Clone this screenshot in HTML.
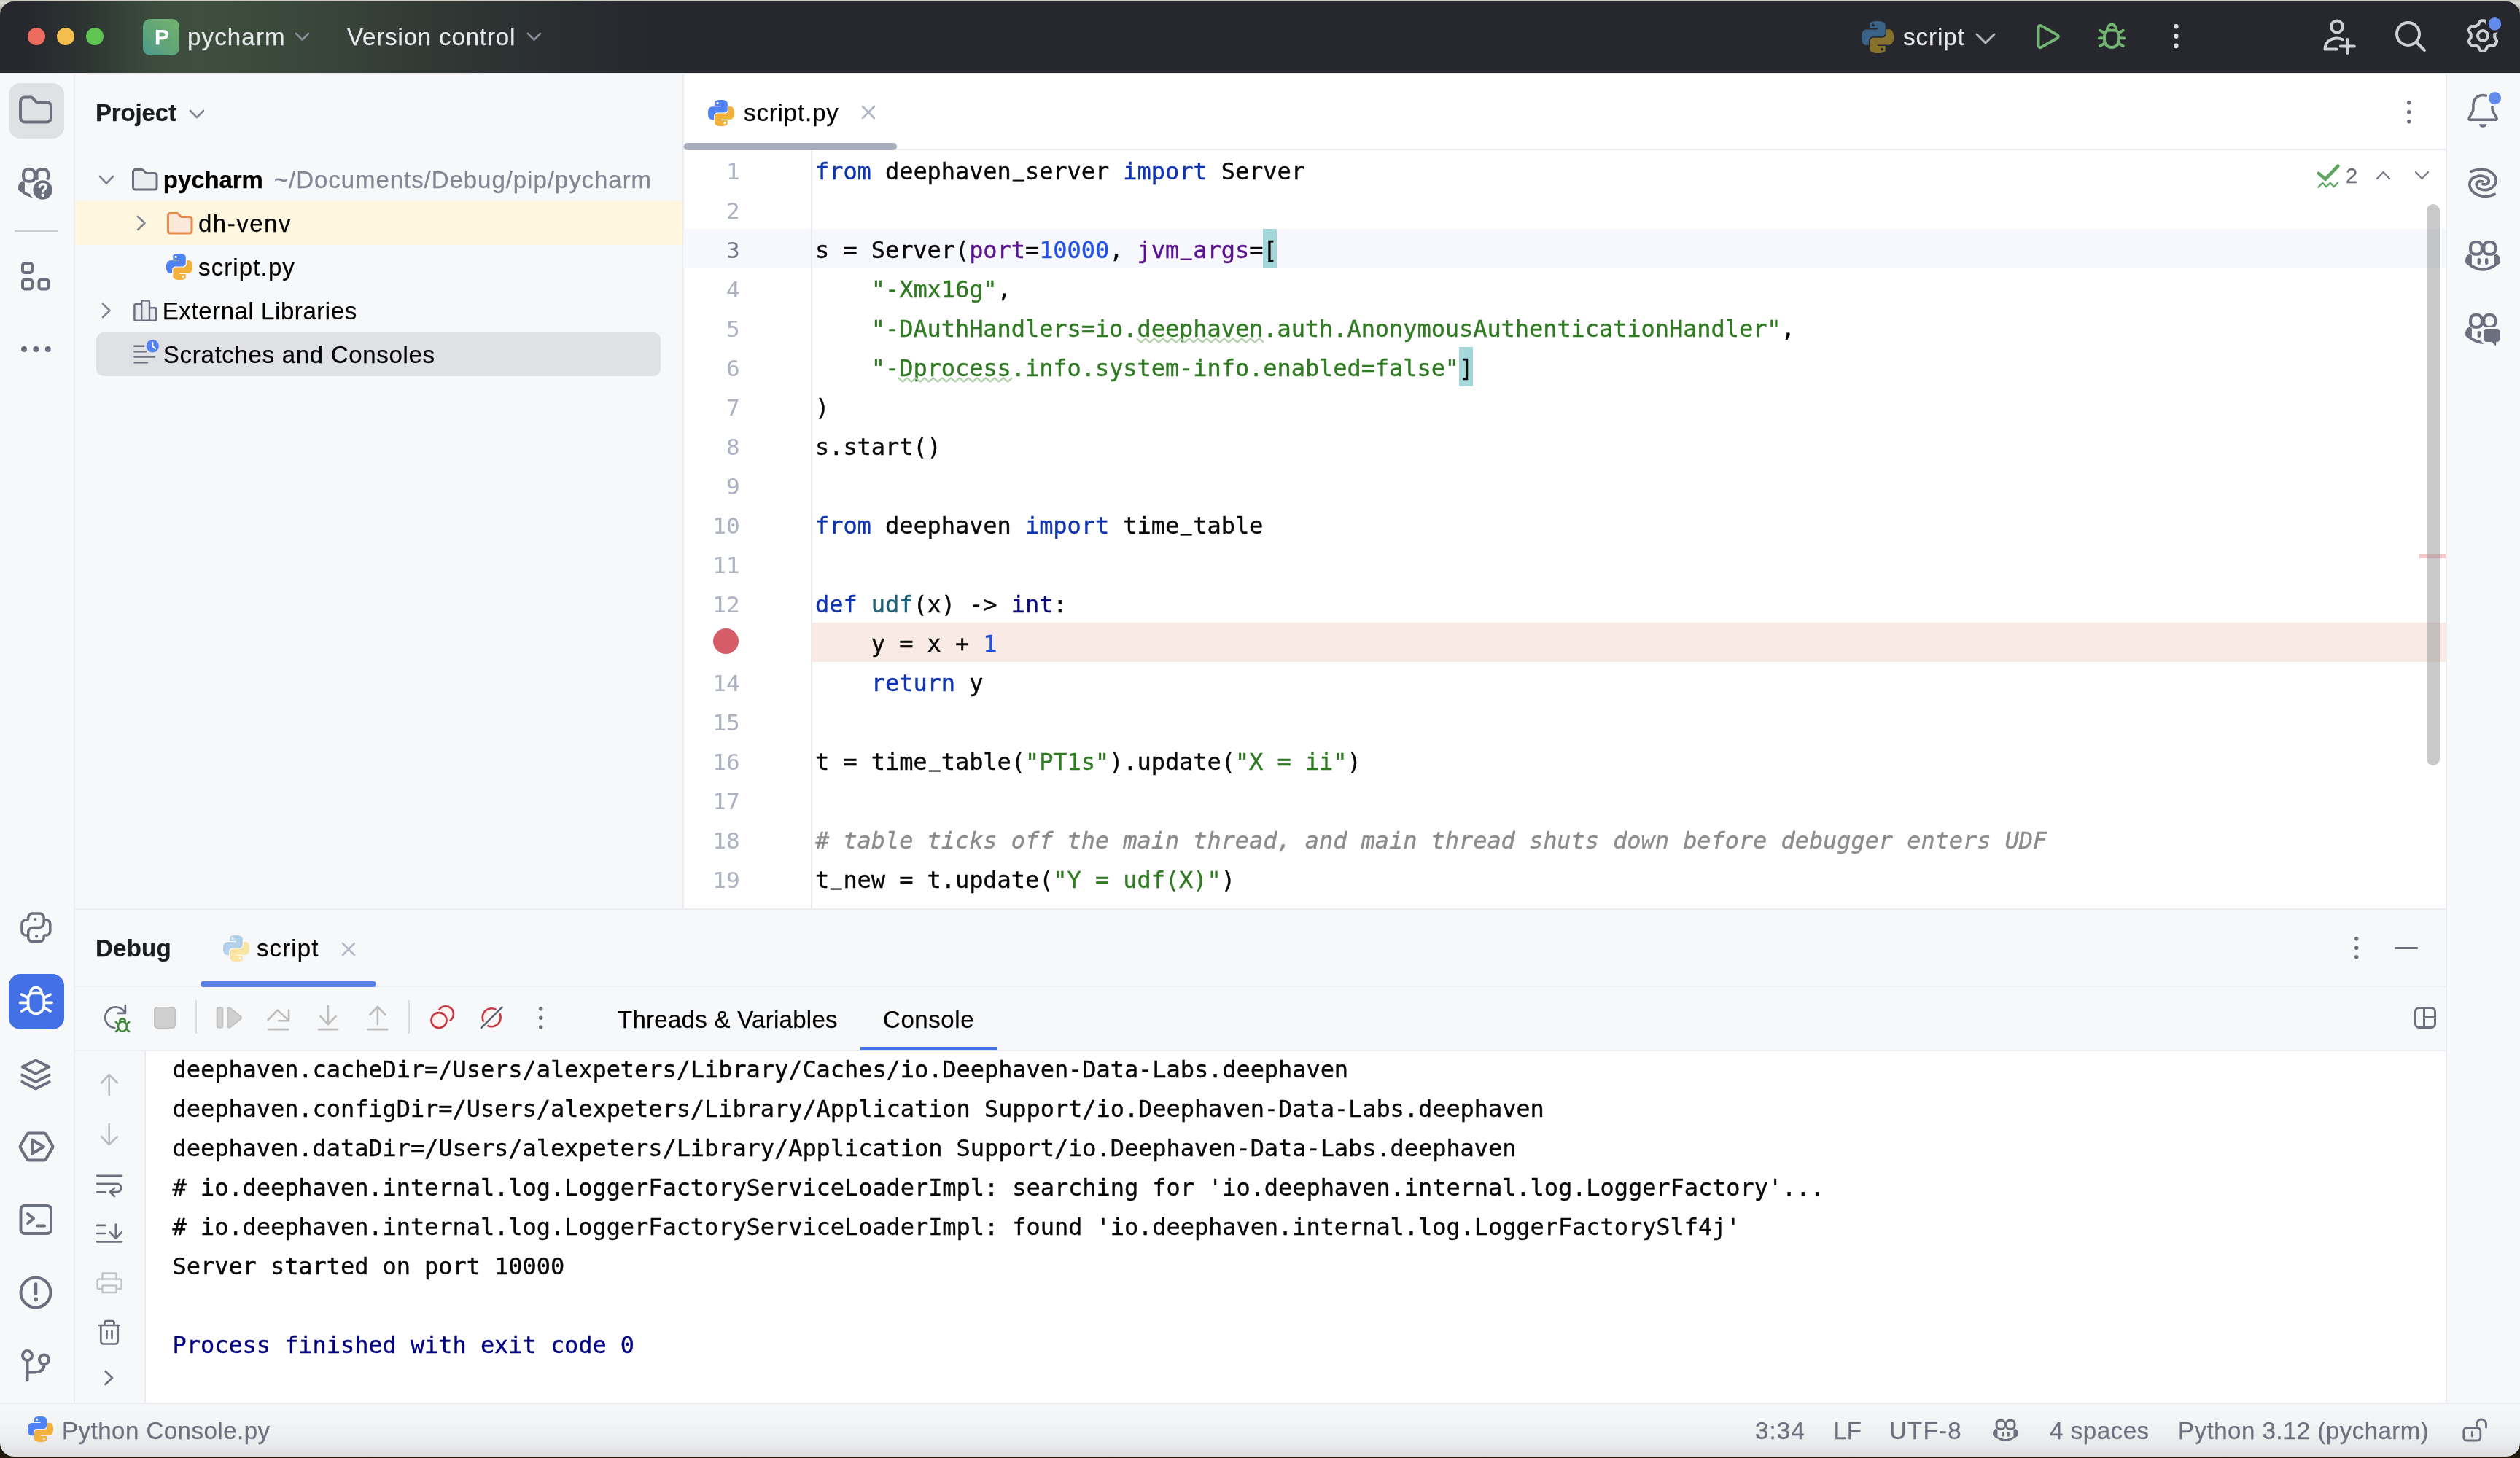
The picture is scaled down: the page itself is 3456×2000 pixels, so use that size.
<!DOCTYPE html><html lang="en"><head><meta charset="utf-8"><title>pycharm – script.py</title><style>
html,body{margin:0;padding:0}
body{width:3456px;height:2000px;overflow:hidden;position:relative;background:linear-gradient(180deg,#c9c8c3 0,#dddbd1 5px,#9a9994 14px,#4a4a4d 24px,#3c3c40 60px,#3c3c40 1940px,#2a2115 1975px,#21170c 2000px);font-family:"Liberation Sans", sans-serif}
.win{position:absolute;left:0;top:2px;width:3456px;height:1996px;border-radius:19px;overflow:hidden}
.pg{position:absolute;left:0;top:-2px;width:3456px;height:2000px;will-change:transform}
.pg>div,.pg>span,.pg>svg{position:absolute}
.i{overflow:visible}
.t{white-space:pre;line-height:60px;height:60px;-webkit-text-stroke:.25px}
.ed{left:937px;top:206px;width:2417px;font-family:"DejaVu Sans Mono", "Liberation Mono", monospace;font-size:32px;letter-spacing:-0.07px;color:#080808;white-space:pre;-webkit-text-stroke:.4px}
.ln{height:54px;line-height:54px;position:relative}
.no{position:absolute;left:0;top:2px;width:77.500px;text-align:right;color:#AEB3C2;font-size:31px;-webkit-text-stroke:.15px}
.no.cur{color:#767A8A}
.cd{position:absolute;left:181px;top:2px}
.k{color:#0F34B0}.s{color:#2F7A22}.n{color:#2250E0}.p{color:#5A1290}.f{color:#1D6078}.b{color:#0A0A80}
.c{color:#8C8C8C;font-style:italic}
.u{display:inline-block;position:relative;top:-5px;transform:scaleX(.8);-webkit-text-stroke:.7px}
.w{position:relative}.w i{position:absolute;left:-1px;right:-1px;top:29.600px;height:10px;overflow:hidden}.w svg{display:block}
.con{left:236.600px;top:1440px;font-family:"DejaVu Sans Mono", "Liberation Mono", monospace;font-size:32px;letter-spacing:-0.07px;color:#080808;white-space:pre;-webkit-text-stroke:.4px}
.con div{height:54px;line-height:54px}
.con .fin{color:#000080}
</style></head><body><div class="win"><div class="pg">
<div style="left:0;top:0;width:3456px;height:100px;background:linear-gradient(90deg,#27282e 0px,#27282e 40px,#2c3331 110px,#3a4a3c 200px,#3f4f3f 270px,#3c4b3c 340px,#374239 480px,#333b36 555px,#2f3533 640px,#2a2d30 777px,#27282e 890px,#27282e 3456px)"></div>
<div style="left:38px;top:38px;width:24px;height:24px;border-radius:12px;background:#ED6A5E"></div>
<div style="left:78px;top:38px;width:24px;height:24px;border-radius:12px;background:#F5BF4F"></div>
<div style="left:118px;top:38px;width:24px;height:24px;border-radius:12px;background:#61C554"></div>
<div style="left:196px;top:26px;width:50px;height:50px;border-radius:10px;background:linear-gradient(225deg,#74b26e 0%,#62a677 50%,#4e998e 100%)"></div>
<span class="t" id="tP" style="left:212.00px;top:21px;font-size:30px;font-weight:700;color:#fff;letter-spacing:0.000px">P</span>
<span class="t" id="tpycharm" style="left:257.00px;top:21px;font-size:33px;color:#E8E9ED;letter-spacing:1.167px">pycharm</span>
<svg class="i" style="left:402.5px;top:43.25px" width="23" height="14.5" viewBox="-3 -3 23 14.5" ><path d="M0 0L8.5 8.5L17 0" fill="none" stroke="#8d909c" stroke-width="2.6" stroke-linecap="round" stroke-linejoin="round"/></svg>
<span class="t" id="tvc" style="left:476.00px;top:21px;font-size:33px;color:#E8E9ED;letter-spacing:0.857px">Version control</span>
<svg class="i" style="left:720.5px;top:43.25px" width="23" height="14.5" viewBox="-3 -3 23 14.5" ><path d="M0 0L8.5 8.5L17 0" fill="none" stroke="#8d909c" stroke-width="2.6" stroke-linecap="round" stroke-linejoin="round"/></svg>
<svg class="i" style="left:2553px;top:29px" width="44" height="44" viewBox="0 0 24 24" ><g><path fill-rule="evenodd" fill="#3B6388" d="M14.25.18l.9.2.73.26.59.3.45.32.34.34.25.34.16.33.1.3.04.26.02.2-.01.13V8.5l-.05.63-.13.55-.21.46-.26.38-.3.31-.33.25-.35.19-.35.14-.33.1-.3.07-.26.04-.21.02H8.77l-.69.05-.59.14-.5.22-.41.27-.33.32-.27.35-.2.36-.15.37-.1.35-.07.32-.04.27-.02.21v3.06H3.17l-.21-.03-.28-.07-.32-.12-.35-.18-.36-.26-.36-.36-.35-.46-.32-.59-.28-.73-.21-.88-.14-1.05-.05-1.23.06-1.22.16-1.04.24-.87.32-.71.36-.57.4-.44.42-.33.42-.24.4-.16.36-.1.32-.05.24-.01h.16l.06.01h8.16v-.83H6.18l-.01-2.75-.02-.37.05-.34.11-.31.17-.28.25-.26.31-.23.38-.2.44-.18.51-.15.58-.12.64-.1.71-.06.77-.04.84-.02 1.27.05zm-6.3 1.98l-.23.33-.08.41.08.41.23.34.33.22.41.09.41-.09.33-.22.23-.34.08-.41-.08-.41-.23-.33-.33-.22-.41-.09-.41.09z"/><path fill-rule="evenodd" fill="#86722A" d="M21.04 6.11l.28.06.32.12.35.18.36.27.36.35.35.47.32.59.28.73.21.88.14 1.04.05 1.23-.06 1.23-.16 1.04-.24.86-.32.71-.36.57-.4.45-.42.33-.42.24-.4.16-.36.09-.32.05-.24.02-.16-.01h-8.22v.82h5.84l.01 2.76.02.36-.05.34-.11.31-.17.29-.25.25-.31.24-.38.2-.44.17-.51.15-.58.13-.64.09-.71.07-.77.04-.84.01-1.27-.04-1.07-.14-.9-.2-.73-.25-.59-.3-.45-.33-.34-.34-.25-.34-.16-.33-.1-.3-.04-.25-.02-.2.01-.13v-5.34l.05-.64.13-.54.21-.46.26-.38.3-.32.33-.24.35-.2.35-.14.33-.1.3-.06.26-.04.21-.02.13-.01h5.84l.69-.05.59-.14.5-.21.41-.28.33-.32.27-.35.2-.36.15-.36.1-.35.07-.32.04-.28.02-.21V6.07h2.09l.14.01zm-6.47 14.25l-.23.33-.08.41.08.41.23.33.33.23.41.08.41-.08.33-.23.23-.33.08-.41-.08-.41-.23-.33-.33-.23-.41-.08-.41.08z"/></g></svg>
<span class="t" id="tscript1" style="left:2610.00px;top:21px;font-size:33px;color:#E8E9ED;letter-spacing:1.000px">script</span>
<svg class="i" style="left:2708.0px;top:44.0px" width="30" height="18" viewBox="-3 -3 30 18" ><path d="M0 0L12.0 12L24 0" fill="none" stroke="#B4B8BF" stroke-width="3" stroke-linecap="round" stroke-linejoin="round"/></svg>
<svg class="i" style="left:2786px;top:26px" width="48" height="48" viewBox="2786 26 48 48"><g fill="none" stroke="#72B471" stroke-width="3.9" stroke-linecap="round" stroke-linejoin="round"><path d="M2795.600 37.400v25.300a2.500 2.500 0 0 0 3.700 2.200l22.300-12.700a2.500 2.500 0 0 0 0-4.300l-22.300-12.700a2.500 2.500 0 0 0-3.700 2.200z"/></g></svg>
<svg class="i" style="left:2872px;top:26px" width="48" height="48" viewBox="2872 26 48 48"><g fill="none" stroke="#72B471" stroke-width="3.9" stroke-linecap="round" stroke-linejoin="round"><path d="M2886.100 48.100a6.500 6.500 0 0 1 6.500-6.500h7a6.500 6.500 0 0 1 6.500 6.500v6.900a10 10 0 0 1-20 0z"/><path d="M2890 41.600v-1.700a6.100 6.100 0 0 1 12.200 0v1.700"/><path d="M2878.800 52.400h6.800M2906.600 52.400h6.800M2880 41.700l6.500 3.900M2880 63.200l6.500-3.900M2911.800 41.700l-6.500 3.900M2911.800 63.200l-6.500-3.900"/></g></svg>
<svg class="i" style="left:2979.7px;top:32.400000000000006px" width="8.6" height="35.2" viewBox="-4.3 -17.6 8.6 35.2" ><circle cx="0" cy="-13.3" r="3.3" fill="#DFE1E5"/><circle cx="0" cy="0" r="3.3" fill="#DFE1E5"/><circle cx="0" cy="13.3" r="3.3" fill="#DFE1E5"/></svg>
<svg class="i" style="left:3180px;top:20px" width="56" height="56" viewBox="0 0 56 56" ><g fill="none" stroke="#CED0D6" stroke-width="4" stroke-linecap="round" stroke-linejoin="round"><circle cx="25" cy="16.5" r="8"/><path d="M24.5 47.5H8.5c0-9 7-15 16.5-15 3 0 5.5.6 7.5 1.7"/><path d="M39.3 34v19M29.8 43.5h19"/></g></svg>
<svg class="i" style="left:3280px;top:24px" width="52" height="52" viewBox="0 0 52 52" ><g fill="none" stroke="#CED0D6" stroke-width="4" stroke-linecap="round" stroke-linejoin="round"><circle cx="22.5" cy="22.5" r="15.5"/><path d="M34 34L45 45"/></g></svg>
<svg class="i" style="left:3378px;top:22px" width="60" height="56" viewBox="0 0 60 56" ><g fill="none" stroke="#CED0D6" stroke-width="4" stroke-linecap="round" stroke-linejoin="round"><path d="M27.0 47.8L26.1 47.8L25.2 47.7L24.3 47.6L23.5 46.9L22.8 46.0L22.2 44.9L21.7 43.9L21.2 42.8L20.8 42.1L20.1 41.8L19.5 41.5L18.9 41.1L18.2 40.7L17.7 40.4L17.1 39.9L16.2 39.9L15.1 40.0L13.9 40.1L12.7 40.1L11.5 40.0L10.5 39.7L10.0 38.9L9.5 38.2L9.0 37.4L8.6 36.6L8.1 35.8L7.8 35.0L8.0 33.9L8.5 32.8L9.1 31.8L9.7 30.8L10.4 29.9L10.8 29.1L10.8 28.4L10.7 27.7L10.7 27.0L10.7 26.3L10.8 25.6L10.8 24.9L10.4 24.1L9.7 23.2L9.1 22.2L8.5 21.2L8.0 20.1L7.8 19.0L8.1 18.2L8.6 17.4L9.0 16.6L9.5 15.8L10.0 15.1L10.5 14.3L11.5 14.0L12.7 13.9L13.9 13.9L15.1 14.0L16.2 14.1L17.1 14.1L17.7 13.6L18.2 13.3L18.8 12.9L19.5 12.5L20.1 12.2L20.8 11.9L21.2 11.2L21.7 10.1L22.2 9.1L22.8 8.0L23.5 7.1L24.3 6.4L25.2 6.3L26.1 6.2L27.0 6.2L27.9 6.2L28.8 6.3L29.7 6.4L30.5 7.1L31.2 8.0L31.8 9.1L32.3 10.1L32.8 11.2L33.2 11.9L33.9 12.2L34.5 12.5L35.2 12.9L35.8 13.3L36.3 13.6L36.9 14.1L37.8 14.1L38.9 14.0L40.1 13.9L41.3 13.9L42.5 14.0L43.5 14.3L44.0 15.1L44.5 15.8L45.0 16.6L45.4 17.4L45.9 18.2L46.2 19.0L46.0 20.1L45.5 21.2L44.9 22.2L44.3 23.2L43.6 24.1L43.2 24.9L43.2 25.6L43.3 26.3L43.3 27.0L43.3 27.7L43.2 28.4L43.2 29.1L43.6 29.9L44.3 30.8L44.9 31.8L45.5 32.8L46.0 33.9L46.2 35.0L45.9 35.8L45.4 36.6L45.0 37.4L44.5 38.2L44.0 38.9L43.5 39.7L42.5 40.0L41.3 40.1L40.1 40.1L38.9 40.0L37.8 39.9L36.9 39.9L36.3 40.4L35.8 40.7L35.1 41.1L34.5 41.5L33.9 41.8L33.2 42.1L32.8 42.8L32.3 43.9L31.8 44.9L31.2 46.0L30.5 46.9L29.7 47.6L28.8 47.7L27.9 47.8L27.0 47.8z"/><circle cx="27" cy="27" r="7"/><circle cx="43.5" cy="10.7" r="12.200" fill="#27282e" stroke="none"/><circle cx="43.5" cy="10.7" r="8.8" fill="#648BEB" stroke="none"/></g></svg>
<div style="left:0px;top:100px;width:3456px;height:1900px;background:#F7F8FA;"></div>
<div style="left:101px;top:100px;width:2px;height:1825px;background:#EBECF0;"></div>
<div style="left:3354px;top:100px;width:2px;height:1825px;background:#EBECF0;"></div>
<div style="left:0px;top:100px;width:3456px;height:2px;background:#EBECF0;"></div>
<div style="left:937px;top:102px;width:2417px;height:1145px;background:#fff;"></div>
<div style="left:936px;top:102px;width:2px;height:1145px;background:#EBECF0;"></div>
<div style="left:937px;top:204px;width:2417px;height:2px;background:#EBECF0;"></div>
<div style="left:103px;top:1246px;width:3251px;height:2px;background:#EBECF0;"></div>
<div style="left:103px;top:1352px;width:3251px;height:2px;background:#EBECF0;"></div>
<div style="left:103px;top:1440px;width:3251px;height:2px;background:#EBECF0;"></div>
<div style="left:199px;top:1442px;width:3155px;height:483px;background:#fff;"></div>
<div style="left:198px;top:1442px;width:2px;height:483px;background:#EBECF0;"></div>
<div style="left:0;top:1924px;width:3456px;height:76px;background:linear-gradient(180deg,#F6F7F9 0%,#F3F4F6 35%,#E9EAEC 72%,#DADADD 100%);border-top:2px solid #EBECF0"></div>
<div style="left:12px;top:114px;width:76px;height:76px;background:#DFE1E5;border-radius:16px"></div>
<svg class="i" style="left:20px;top:122px" width="60" height="60" viewBox="0 0 60 60" ><g fill="none" stroke="#6C707E" stroke-width="4" stroke-linecap="round" stroke-linejoin="round"><path d="M8 17.5a6 6 0 0 1 6-6h8.2a4 4 0 0 1 3 1.3l3.6 4a4 4 0 0 0 3 1.3H44a6 6 0 0 1 6 6v15.4a6 6 0 0 1-6 6H14a6 6 0 0 1-6-6z"/></g></svg>
<svg class="i" style="left:10px;top:210px" width="80" height="80" viewBox="0 0 80 80"><path fill="#6C707E" d="M20.500 38.300C17 40.500 15.100 43.500 15.100 46.600V50.500C21 56 30 61.700 39 61.700S57 56 63.100 50.500V46.600C63.100 43.500 61.200 40.500 57.700 38.300L54.100 40.300V52.700C49 55.500 44 57.600 39 57.600S29 55.500 23.900 52.700V40.300z"/><path fill="#F7F8FA" d="M40 40.500h28V67H39.500L31 57l1-2z"/><g fill="none" stroke="#6C707E" stroke-width="4.1"><rect x="22.100" y="22.100" width="15.700" height="16.700" rx="6.300"/><rect x="40.400" y="22.100" width="15.700" height="16.700" rx="6.300"/></g><circle cx="48.600" cy="50.500" r="15.600" fill="#F7F8FA"/><circle cx="48.600" cy="50.500" r="13.200" fill="#6C707E"/><path d="M44.300 46.300c.6-2.400 2.200-3.600 4.500-3.600 2.600 0 4.300 1.500 4.300 3.600 0 3.200-4.300 3.400-4.300 6.600" fill="none" stroke="#F7F8FA" stroke-width="3.300" stroke-linecap="round" stroke-linejoin="round"/><circle cx="48.700" cy="57.800" r="2.400" fill="#F7F8FA"/></svg>
<div style="left:20px;top:316px;width:60px;height:2px;background:#C9CCD6;"></div>
<svg class="i" style="left:20px;top:350px" width="60" height="60" viewBox="0 0 60 60" ><g fill="none" stroke="#6C707E" stroke-width="4" stroke-linecap="round" stroke-linejoin="round"><rect x="11" y="11" width="13" height="13" rx="3"/><rect x="11" y="33.500" width="13" height="13" rx="3"/><rect x="33.500" y="33.500" width="13" height="13" rx="3"/></g></svg>
<svg class="i" style="left:27.6px;top:473.5px" width="42.8" height="10" viewBox="-21.4 -5 42.8 10" ><circle cx="-16.4" cy="0" r="4" fill="#6C707E"/><circle cx="0" cy="0" r="4" fill="#6C707E"/><circle cx="16.4" cy="0" r="4" fill="#6C707E"/></svg>
<svg class="i" style="left:25.5px;top:1249.3px" width="46.8" height="46.8" viewBox="25.5 1249.3 46.8 46.8"><g fill="none" stroke="#6C707E" stroke-width="3.5" stroke-linejoin="round" stroke-linecap="round"><path d="M44.0 1253.3L53.8 1253.3A5.8 5.8 0 0 1 59.6 1259.1L59.6 1260.1A1.9 1.9 0 0 0 61.5 1262.0L62.5 1262.0A5.8 5.8 0 0 1 68.3 1267.9L68.3 1277.5A5.8 5.8 0 0 1 62.5 1283.4L61.5 1283.4A1.9 1.9 0 0 0 59.6 1285.3L59.6 1286.3A5.8 5.8 0 0 1 53.8 1292.1L44.0 1292.1A5.8 5.8 0 0 1 38.2 1286.3L38.2 1285.3A1.9 1.9 0 0 0 36.3 1283.4L35.3 1283.4A5.8 5.8 0 0 1 29.5 1277.5L29.5 1267.9A5.8 5.8 0 0 1 35.3 1262.0L36.3 1262.0A1.9 1.9 0 0 0 38.2 1260.1L38.2 1259.1A5.8 5.8 0 0 1 44.0 1253.3z"/><path d="M59.6 1262.0L59.6 1266.3A6.4 6.4 0 0 1 53.2 1272.7L44.6 1272.7A6.4 6.4 0 0 0 38.2 1279.1L38.2 1283.4"/></g><circle cx="47.7" cy="1261.4" r="2.1" fill="#6C707E"/><circle cx="49.7" cy="1284.7" r="2.1" fill="#6C707E"/></svg>
<div style="left:12px;top:1336px;width:76px;height:76px;background:#4470E6;border-radius:16px"></div>
<svg class="i" style="left:20px;top:1344px" width="60" height="60" viewBox="20 1344 60 60"><g fill="none" stroke="#fff" stroke-width="3.7" stroke-linecap="round" stroke-linejoin="round"><path d="M38.600 1369a6.500 6.500 0 0 1 6.500-6.500h8.600a6.500 6.500 0 0 1 6.500 6.500v10.600a10.800 10.800 0 0 1-21.600 0z"/><path d="M41.800 1362a7.600 7.600 0 0 1 15.200 0"/><path d="M27.500 1375.300h10.500M61 1375.300h10M29.800 1364.200l8 4.300M29.800 1387l8-4.500M69 1364.200l-8 4.300M69 1387l-8-4.500"/></g></svg>
<svg class="i" style="left:20px;top:1444px" width="60" height="60" viewBox="20 1444 60 60"><g fill="none" stroke="#6C707E" stroke-width="3.7" stroke-linecap="round" stroke-linejoin="round"><path d="M49 1454.300L30.600 1463.500 49 1472.800l18.400-9.300z"/><path d="M30.200 1474.500L49 1484l18.800-9.500"/><path d="M30.200 1484L49 1493.500l18.800-9.500"/></g></svg>
<svg class="i" style="left:20px;top:1543px" width="60" height="60" viewBox="0 0 60 60" ><g fill="none" stroke="#6C707E" stroke-width="4" stroke-linecap="round" stroke-linejoin="round"><path d="M19.500 11.500h21a3 3 0 0 1 2.600 1.500L52 28.500a3 3 0 0 1 0 3L43 47a3 3 0 0 1-2.600 1.500h-21A3 3 0 0 1 17 47L8 31.500a3 3 0 0 1 0-3L17 13a3 3 0 0 1 2.500-1.500z"/><path d="M24 20.500v19l16-9.500z"/></g></svg>
<svg class="i" style="left:20px;top:1644px" width="60" height="60" viewBox="0 0 60 60" ><g fill="none" stroke="#6C707E" stroke-width="4" stroke-linecap="round" stroke-linejoin="round"><rect x="8.500" y="10" width="41.500" height="38" rx="5"/><path d="M18 21l8 6.500-8 6.500M31 37.500h10"/></g></svg>
<svg class="i" style="left:20px;top:1744px" width="60" height="60" viewBox="0 0 60 60" ><g fill="none" stroke="#6C707E" stroke-width="4" stroke-linecap="round" stroke-linejoin="round"><circle cx="29" cy="29" r="20.500"/><path d="M29 17.500v13" stroke-width="4.600"/><circle cx="29" cy="38.500" r="3" fill="#6C707E" stroke="none"/></g></svg>
<svg class="i" style="left:21px;top:1844px" width="60" height="60" viewBox="0 0 60 60" ><g fill="none" stroke="#6C707E" stroke-width="4" stroke-linecap="round" stroke-linejoin="round"><circle cx="16.500" cy="15.500" r="6.500"/><circle cx="39.500" cy="21" r="6.500"/><path d="M16.500 22v27.500"/><path d="M39.500 27.500c0 8-6 11-14 11h-9"/></g></svg>
<span class="t" id="tProject" style="left:131.00px;top:125px;font-size:33px;font-weight:700;color:#1b1c1f;letter-spacing:-0.167px">Project</span>
<svg class="i" style="left:258.0px;top:148.5px" width="24" height="15" viewBox="-3 -3 24 15" ><path d="M0 0L9.0 9L18 0" fill="none" stroke="#7F8392" stroke-width="2.6" stroke-linecap="round" stroke-linejoin="round"/></svg>
<div style="left:103px;top:276px;width:833px;height:60px;background:#FFF6DF;"></div>
<div style="left:132px;top:456px;width:774px;height:60px;background:#DFE1E5;border-radius:10px"></div>
<svg class="i" style="left:133.5px;top:238.75px" width="24" height="15.5" viewBox="-3 -3 24 15.5" ><path d="M0 0L9.0 9.5L18 0" fill="none" stroke="#7F8392" stroke-width="2.6" stroke-linecap="round" stroke-linejoin="round"/></svg>
<svg class="i" style="left:176px;top:226px" width="46" height="40" viewBox="0 0 46 40" ><g fill="none" stroke="#6C707E" stroke-width="3" stroke-linecap="round" stroke-linejoin="round"><path d="M6.500 9.500a3 3 0 0 1 3-3h9a3 3 0 0 1 2.200 1l2.800 3a3 3 0 0 0 2.200 1H36a3 3 0 0 1 3 3V31a3 3 0 0 1-3 3H9.500a3 3 0 0 1-3-3z" fill="#EBECF0"/></g></svg>
<span class="t" id="tpy2" style="left:223.80px;top:217px;font-size:33px;font-weight:700;color:#000;letter-spacing:-0.067px">pycharm</span>
<span class="t" id="tpath" style="left:375.80px;top:217px;font-size:33px;color:#818594;letter-spacing:0.950px">~/Documents/Debug/pip/pycharm</span>
<svg class="i" style="left:185.75px;top:294.0px" width="15.5" height="24" viewBox="-3 -3 15.5 24" ><path d="M0 0L9.5 9.0L0 18" fill="none" stroke="#7F8392" stroke-width="2.6" stroke-linecap="round" stroke-linejoin="round"/></svg>
<svg class="i" style="left:223.5px;top:286px" width="46" height="40" viewBox="0 0 46 40" ><g fill="none" stroke="#E58A4B" stroke-width="3" stroke-linecap="round" stroke-linejoin="round"><path d="M6.500 9.500a3 3 0 0 1 3-3h9a3 3 0 0 1 2.200 1l2.800 3a3 3 0 0 0 2.200 1H36a3 3 0 0 1 3 3V31a3 3 0 0 1-3 3H9.500a3 3 0 0 1-3-3z" fill="#FCE8DB"/></g></svg>
<span class="t" id="tdhvenv" style="left:272.00px;top:277px;font-size:33px;color:#000;letter-spacing:1.500px">dh-venv</span>
<svg class="i" style="left:228px;top:348px" width="36" height="36" viewBox="0 0 24 24" ><g><path fill-rule="evenodd" fill="#4F82F2" d="M14.25.18l.9.2.73.26.59.3.45.32.34.34.25.34.16.33.1.3.04.26.02.2-.01.13V8.5l-.05.63-.13.55-.21.46-.26.38-.3.31-.33.25-.35.19-.35.14-.33.1-.3.07-.26.04-.21.02H8.77l-.69.05-.59.14-.5.22-.41.27-.33.32-.27.35-.2.36-.15.37-.1.35-.07.32-.04.27-.02.21v3.06H3.17l-.21-.03-.28-.07-.32-.12-.35-.18-.36-.26-.36-.36-.35-.46-.32-.59-.28-.73-.21-.88-.14-1.05-.05-1.23.06-1.22.16-1.04.24-.87.32-.71.36-.57.4-.44.42-.33.42-.24.4-.16.36-.1.32-.05.24-.01h.16l.06.01h8.16v-.83H6.18l-.01-2.75-.02-.37.05-.34.11-.31.17-.28.25-.26.31-.23.38-.2.44-.18.51-.15.58-.12.64-.1.71-.06.77-.04.84-.02 1.27.05zm-6.3 1.98l-.23.33-.08.41.08.41.23.34.33.22.41.09.41-.09.33-.22.23-.34.08-.41-.08-.41-.23-.33-.33-.22-.41-.09-.41.09z"/><path fill-rule="evenodd" fill="#F2B03D" d="M21.04 6.11l.28.06.32.12.35.18.36.27.36.35.35.47.32.59.28.73.21.88.14 1.04.05 1.23-.06 1.23-.16 1.04-.24.86-.32.71-.36.57-.4.45-.42.33-.42.24-.4.16-.36.09-.32.05-.24.02-.16-.01h-8.22v.82h5.84l.01 2.76.02.36-.05.34-.11.31-.17.29-.25.25-.31.24-.38.2-.44.17-.51.15-.58.13-.64.09-.71.07-.77.04-.84.01-1.27-.04-1.07-.14-.9-.2-.73-.25-.59-.3-.45-.33-.34-.34-.25-.34-.16-.33-.1-.3-.04-.25-.02-.2.01-.13v-5.34l.05-.64.13-.54.21-.46.26-.38.3-.32.33-.24.35-.2.35-.14.33-.1.3-.06.26-.04.21-.02.13-.01h5.84l.69-.05.59-.14.5-.21.41-.28.33-.32.27-.35.2-.36.15-.36.1-.35.07-.32.04-.28.02-.21V6.07h2.09l.14.01zm-6.47 14.25l-.23.33-.08.41.08.41.23.33.33.23.41.08.41-.08.33-.23.23-.33.08-.41-.08-.41-.23-.33-.33-.23-.41-.08-.41.08z"/></g></svg>
<span class="t" id="tscriptpy1" style="left:272.00px;top:337px;font-size:33px;color:#000;letter-spacing:1.125px">script.py</span>
<svg class="i" style="left:137.75px;top:414.0px" width="15.5" height="24" viewBox="-3 -3 15.5 24" ><path d="M0 0L9.5 9.0L0 18" fill="none" stroke="#7F8392" stroke-width="2.6" stroke-linecap="round" stroke-linejoin="round"/></svg>
<svg class="i" style="left:180px;top:406px" width="40" height="40" viewBox="180 406 40 40"><g fill="none" stroke="#6C707E" stroke-width="2.4" stroke-linecap="round" stroke-linejoin="round"><path d="M184.400 419.200a2 2 0 0 1 2-2h7.800v22.500h-7.800a2 2 0 0 1-2-2zM194.200 414.200a2 2 0 0 1 2-2h6.800a2 2 0 0 1 2 2v25.500h-10.800zM205 422.200h7.100a2 2 0 0 1 2 2v13.500a2 2 0 0 1-2 2H205z" fill="#EBECF0"/></g></svg>
<span class="t" id="textlib" style="left:222.80px;top:397px;font-size:33px;color:#000;letter-spacing:0.565px">External Libraries</span>
<svg class="i" style="left:180px;top:462px" width="42" height="42" viewBox="180 462 42 42"><g fill="none" stroke="#6C707E" stroke-width="2.5" stroke-linecap="round" stroke-linejoin="round"><path d="M184.400 474.700H197M184.400 482.300h15.500M184.400 489.500h27.400M184.400 497.300H202"/><circle cx="209.300" cy="474.700" r="10.300" fill="#DFE1E5" stroke="none"/><circle cx="209.300" cy="474.700" r="8.700" fill="#5580F0" stroke="none"/><path d="M209.300 469.700v5l3.700 3.700" stroke="#fff" stroke-width="2"/></g></svg>
<span class="t" id="tscratch" style="left:223.80px;top:457px;font-size:33px;color:#000;letter-spacing:0.695px">Scratches and Consoles</span>
<svg class="i" style="left:970.5px;top:136.5px" width="36" height="36" viewBox="0 0 24 24" ><g><path fill-rule="evenodd" fill="#4F82F2" d="M14.25.18l.9.2.73.26.59.3.45.32.34.34.25.34.16.33.1.3.04.26.02.2-.01.13V8.5l-.05.63-.13.55-.21.46-.26.38-.3.31-.33.25-.35.19-.35.14-.33.1-.3.07-.26.04-.21.02H8.77l-.69.05-.59.14-.5.22-.41.27-.33.32-.27.35-.2.36-.15.37-.1.35-.07.32-.04.27-.02.21v3.06H3.17l-.21-.03-.28-.07-.32-.12-.35-.18-.36-.26-.36-.36-.35-.46-.32-.59-.28-.73-.21-.88-.14-1.05-.05-1.23.06-1.22.16-1.04.24-.87.32-.71.36-.57.4-.44.42-.33.42-.24.4-.16.36-.1.32-.05.24-.01h.16l.06.01h8.16v-.83H6.18l-.01-2.75-.02-.37.05-.34.11-.31.17-.28.25-.26.31-.23.38-.2.44-.18.51-.15.58-.12.64-.1.71-.06.77-.04.84-.02 1.27.05zm-6.3 1.98l-.23.33-.08.41.08.41.23.34.33.22.41.09.41-.09.33-.22.23-.34.08-.41-.08-.41-.23-.33-.33-.22-.41-.09-.41.09z"/><path fill-rule="evenodd" fill="#F2B03D" d="M21.04 6.11l.28.06.32.12.35.18.36.27.36.35.35.47.32.59.28.73.21.88.14 1.04.05 1.23-.06 1.23-.16 1.04-.24.86-.32.71-.36.57-.4.45-.42.33-.42.24-.4.16-.36.09-.32.05-.24.02-.16-.01h-8.22v.82h5.84l.01 2.76.02.36-.05.34-.11.31-.17.29-.25.25-.31.24-.38.2-.44.17-.51.15-.58.13-.64.09-.71.07-.77.04-.84.01-1.27-.04-1.07-.14-.9-.2-.73-.25-.59-.3-.45-.33-.34-.34-.25-.34-.16-.33-.1-.3-.04-.25-.02-.2.01-.13v-5.34l.05-.64.13-.54.21-.46.26-.38.3-.32.33-.24.35-.2.35-.14.33-.1.3-.06.26-.04.21-.02.13-.01h5.84l.69-.05.59-.14.5-.21.41-.28.33-.32.27-.35.2-.36.15-.36.1-.35.07-.32.04-.28.02-.21V6.07h2.09l.14.01zm-6.47 14.25l-.23.33-.08.41.08.41.23.33.33.23.41.08.41-.08.33-.23.23-.33.08-.41-.08-.41-.23-.33-.33-.23-.41-.08-.41.08z"/></g></svg>
<span class="t" id="tscriptpy2" style="left:1020.00px;top:125px;font-size:33px;color:#000;letter-spacing:0.875px">script.py</span>
<svg class="i" style="left:1180.5px;top:144.0px" width="20" height="20" viewBox="-10.0 -10.0 20 20" ><path d="M-8.0 -8.0L8.0 8.0M8.0 -8.0L-8.0 8.0" stroke="#B0B4C4" stroke-width="2.6" stroke-linecap="round" fill="none"/></svg>
<div style="left:938px;top:196px;width:292px;height:9.5px;background:#A8ADBD;border-radius:4.700px"></div>
<svg class="i" style="left:3300.2px;top:137.2px" width="7.6" height="33.6" viewBox="-3.8 -16.8 7.6 33.6" ><circle cx="0" cy="-13" r="2.8" fill="#6C707E"/><circle cx="0" cy="0" r="2.8" fill="#6C707E"/><circle cx="0" cy="13" r="2.8" fill="#6C707E"/></svg>
<div style="left:937px;top:314px;width:2417px;height:54px;background:#F6F8FE;"></div>
<div style="left:1113px;top:854px;width:2241px;height:54px;background:#FAEAE6;"></div>
<div style="left:1112px;top:206px;width:2px;height:1040px;background:#EBECF0;"></div>
<div style="left:1732.4px;top:314px;width:18.5px;height:54px;background:#A4D7D9;"></div>
<div style="left:2000.6999999999998px;top:476px;width:19.0px;height:54px;background:#A4D7D9;"></div>
<div class="ed"><div class="ln"><span class="no">1</span><span class="cd"><span class="k">from</span> deephaven<span class="u">_</span>server <span class="k">import</span> Server</span></div><div class="ln"><span class="no">2</span><span class="cd"></span></div><div class="ln"><span class="no cur">3</span><span class="cd">s = Server(<span class="p">port</span>=<span class="n">10000</span>, <span class="p">jvm<span class="u">_</span>args</span>=[</span></div><div class="ln"><span class="no">4</span><span class="cd">    <span class="s">&quot;-Xmx16g&quot;</span>,</span></div><div class="ln"><span class="no">5</span><span class="cd">    <span class="s">&quot;-DAuthHandlers=io.</span><span class="s w">deephaven<i><svg width="174.8" height="10" viewBox="0 0 174.8 10"><polyline points="0 2.4 6 7.6 12 2.4 18 7.6 24 2.4 30 7.6 36 2.4 42 7.6 48 2.4 54 7.6 60 2.4 66 7.6 72 2.4 78 7.6 84 2.4 90 7.6 96 2.4 102 7.6 108 2.4 114 7.6 120 2.4 126 7.6 132 2.4 138 7.6 144 2.4 150 7.6 156 2.4 162 7.6 168 2.4 174 7.6 180 2.4" fill="none" stroke="#B4D0AE" stroke-width="2.4" stroke-linejoin="round" stroke-linecap="round"/></svg></i></span><span class="s">.auth.AnonymousAuthenticationHandler&quot;</span>,</span></div><div class="ln"><span class="no">6</span><span class="cd">    <span class="s">&quot;-</span><span class="s w">Dprocess<i><svg width="155.6" height="10" viewBox="0 0 155.6 10"><polyline points="0 2.4 6 7.6 12 2.4 18 7.6 24 2.4 30 7.6 36 2.4 42 7.6 48 2.4 54 7.6 60 2.4 66 7.6 72 2.4 78 7.6 84 2.4 90 7.6 96 2.4 102 7.6 108 2.4 114 7.6 120 2.4 126 7.6 132 2.4 138 7.6 144 2.4 150 7.6 156 2.4 162 7.6" fill="none" stroke="#B4D0AE" stroke-width="2.4" stroke-linejoin="round" stroke-linecap="round"/></svg></i></span><span class="s">.info.system-info.enabled=false&quot;</span>]</span></div><div class="ln"><span class="no">7</span><span class="cd">)</span></div><div class="ln"><span class="no">8</span><span class="cd">s.start()</span></div><div class="ln"><span class="no">9</span><span class="cd"></span></div><div class="ln"><span class="no">10</span><span class="cd"><span class="k">from</span> deephaven <span class="k">import</span> time<span class="u">_</span>table</span></div><div class="ln"><span class="no">11</span><span class="cd"></span></div><div class="ln"><span class="no">12</span><span class="cd"><span class="k">def</span> <span class="f">udf</span>(x) -&gt; <span class="b">int</span>:</span></div><div class="ln"><span class="no"></span><span class="cd">    y = x + <span class="n">1</span></span></div><div class="ln"><span class="no">14</span><span class="cd">    <span class="k">return</span> y</span></div><div class="ln"><span class="no">15</span><span class="cd"></span></div><div class="ln"><span class="no">16</span><span class="cd">t = time<span class="u">_</span>table(<span class="s">&quot;PT1s&quot;</span>).update(<span class="s">&quot;X = ii&quot;</span>)</span></div><div class="ln"><span class="no">17</span><span class="cd"></span></div><div class="ln"><span class="no">18</span><span class="cd"><span class="c"># table ticks off the main thread, and main thread shuts down before debugger enters UDF</span></span></div><div class="ln"><span class="no">19</span><span class="cd">t<span class="u">_</span>new = t.update(<span class="s">&quot;Y = udf(X)&quot;</span>)</span></div></div>
<div style="left:978px;top:862px;width:35px;height:35px;border-radius:50%;background:#D65D68"></div>
<svg class="i" style="left:3172px;top:220px" width="42" height="44" viewBox="3172 220 42 44"><g fill="none" stroke="#5FA463" stroke-width="4" stroke-linecap="round" stroke-linejoin="round"><path d="M3179.800 237.600l9.200 8.200 17.400-18.200" stroke-width="4.600"/><path d="M3179.400 256.900l5.900-6.200 4.900 5.600 5.600-5.600 4.900 5.600 5.200-5.600" stroke-width="2.300"/></g></svg>
<span class="t" id="t2" style="left:3217.00px;top:211px;font-size:29px;color:#6A6D78;letter-spacing:0.000px">2</span>
<svg class="i" style="left:3256.5px;top:232.5px" width="23" height="15" viewBox="-3 -3 23 15" ><path d="M0 9L8.5 0L17 9" fill="none" stroke="#7A7E8D" stroke-width="2.4" stroke-linecap="round" stroke-linejoin="round"/></svg>
<svg class="i" style="left:3310.0px;top:232.5px" width="23" height="15" viewBox="-3 -3 23 15" ><path d="M0 0L8.5 9L17 0" fill="none" stroke="#7A7E8D" stroke-width="2.4" stroke-linecap="round" stroke-linejoin="round"/></svg>
<div style="left:3318px;top:760px;width:36px;height:6px;background:#F6C9CC;"></div>
<div style="left:3328px;top:280px;width:18px;height:770px;background:rgba(140,140,140,.47);border-radius:9px"></div>
<svg class="i" style="left:3375px;top:121px" width="60" height="60" viewBox="3375 121 60 60"><g fill="none" stroke="#6C707E" stroke-width="3.5" stroke-linecap="round" stroke-linejoin="round"><path d="M3409.400 131.200C3408 130.700 3406.600 130.400 3405.100 130.400C3397.500 130.400 3391.900 136.500 3391.900 144.600V149C3391.900 150.500 3391.600 151.800 3391 153L3386.200 162a1.600 1.600 0 0 0 1.400 2.300H3422.600a1.600 1.600 0 0 0 1.400-2.300L3419 153C3418.400 151.800 3418 150.500 3418 149V146.600"/><path d="M3399.900 170.200a5.200 4.600 0 0 0 10.400 0z" fill="#6C707E" stroke="none"/><circle cx="3421.500" cy="134.700" r="8.600" fill="#648BEB" stroke="none"/></g></svg>
<svg class="i" style="left:3366px;top:210px" width="80" height="80" viewBox="3366 210 80 80"><g fill="none" stroke="#6C707E" stroke-width="3.7" stroke-linecap="round" stroke-linejoin="round"><path d="M3388.8 235.2C3390.0 234.8 3393.4 233.5 3396.0 233.0C3398.6 232.5 3401.7 232.2 3404.4 232.3C3407.1 232.4 3409.7 232.9 3412.0 233.8C3414.3 234.7 3416.4 236.2 3418.1 237.6C3419.8 239.0 3421.2 240.8 3422.0 242.5C3422.8 244.2 3423.1 246.2 3423.1 247.9C3423.1 249.6 3422.6 251.3 3421.8 252.8C3421.0 254.3 3419.4 255.7 3418.1 256.8C3416.8 257.9 3415.4 258.8 3413.8 259.4C3412.2 260.0 3410.4 260.5 3408.8 260.6C3407.2 260.8 3405.5 260.6 3404.0 260.3C3402.5 260.0 3401.1 259.5 3400.0 258.8C3398.9 258.1 3397.8 257.2 3397.2 256.3C3396.6 255.4 3396.3 254.2 3396.2 253.3C3396.1 252.4 3396.3 251.7 3396.7 251.0C3397.1 250.3 3397.7 249.7 3398.4 249.3C3399.1 248.9 3400.0 248.7 3401.0 248.6C3402.0 248.5 3403.8 248.8 3404.4 248.8"/><path d="M3421.1 266.5C3420.0 266.9 3416.8 268.2 3414.5 268.7C3412.2 269.2 3409.8 269.5 3407.2 269.4C3404.6 269.2 3401.5 268.7 3399.0 267.8C3396.5 266.9 3394.1 265.3 3392.3 263.8C3390.5 262.3 3389.3 260.6 3388.4 259.0C3387.5 257.4 3387.1 255.5 3386.9 253.9C3386.8 252.3 3387.0 250.8 3387.5 249.3C3388.0 247.8 3388.8 246.2 3390.1 245.1C3391.3 243.9 3393.2 243.1 3395.0 242.4C3396.8 241.8 3399.3 241.3 3401.1 241.2C3402.9 241.1 3404.4 241.3 3406.0 241.7C3407.6 242.1 3409.3 243.1 3410.4 243.8C3411.5 244.6 3412.2 245.4 3412.7 246.2C3413.2 247.0 3413.2 247.9 3413.2 248.6C3413.2 249.3 3413.1 250.0 3412.7 250.6C3412.3 251.2 3411.7 251.7 3411.0 252.1C3410.3 252.5 3409.3 252.7 3408.3 252.8C3407.3 252.9 3405.6 252.6 3405.0 252.6"/></g></svg>
<svg class="i" style="left:3366px;top:310px" width="80" height="80" viewBox="0 0 80 80"><g fill="none" stroke="#6C707E" stroke-width="4.1"><rect x="22.100" y="22.100" width="15.700" height="16.700" rx="6.300"/><rect x="40.400" y="22.100" width="15.700" height="16.700" rx="6.300"/></g><path fill="#6C707E" d="M20.500 38.300C17 40.500 15.100 43.500 15.100 46.600V50.500C21 56 30 61.700 39 61.700S57 56 63.100 50.500V46.600C63.100 43.500 61.200 40.500 57.700 38.300L54.100 40.300V52.700C49 55.500 44 57.600 39 57.600S29 55.500 23.900 52.700V40.300z"/><rect x="31.600" y="43.900" width="4.400" height="9.100" rx="2.200" fill="#6C707E"/><rect x="42" y="43.900" width="4.400" height="9.100" rx="2.200" fill="#6C707E"/></svg>
<svg class="i" style="left:3366px;top:410px" width="80" height="80" viewBox="0 0 80 80"><g fill="none" stroke="#6C707E" stroke-width="4.1"><rect x="22.100" y="22.100" width="15.700" height="16.700" rx="6.300"/><rect x="40.400" y="22.100" width="15.700" height="16.700" rx="6.300"/></g><path fill="#6C707E" d="M20.500 38.300C17 40.500 15.100 43.500 15.100 46.600V50.500C21 56 30 61.700 39 61.700S57 56 63.100 50.500V46.600C63.100 43.500 61.200 40.500 57.700 38.300L54.100 40.300V52.700C49 55.500 44 57.600 39 57.600S29 55.500 23.900 52.700V40.300z"/><rect x="31.600" y="43.900" width="4.400" height="9.100" rx="2.200" fill="#6C707E"/><path fill="#F7F8FA" d="M37.500 38.400h28V67H44.600L36.200 57.300l1.300-2.300z"/><path fill="#6C707E" d="M44.400 40.900h14a4.400 4.400 0 0 1 4.400 4.400v9.300a4.400 4.400 0 0 1-4.400 4.400h-1.100l-.3 5.500-6-5.500h-6.600a4.400 4.400 0 0 1-4.400-4.400v-9.300a4.400 4.400 0 0 1 4.400-4.400z"/></svg>
<span class="t" id="tDebug" style="left:131.00px;top:1271px;font-size:33px;font-weight:700;color:#1b1c1f;letter-spacing:0.250px">Debug</span>
<svg class="i" style="left:306px;top:1283px" width="36" height="36" viewBox="0 0 24 24" ><g><path fill-rule="evenodd" fill="#B3D1E8" d="M14.25.18l.9.2.73.26.59.3.45.32.34.34.25.34.16.33.1.3.04.26.02.2-.01.13V8.5l-.05.63-.13.55-.21.46-.26.38-.3.31-.33.25-.35.19-.35.14-.33.1-.3.07-.26.04-.21.02H8.77l-.69.05-.59.14-.5.22-.41.27-.33.32-.27.35-.2.36-.15.37-.1.35-.07.32-.04.27-.02.21v3.06H3.17l-.21-.03-.28-.07-.32-.12-.35-.18-.36-.26-.36-.36-.35-.46-.32-.59-.28-.73-.21-.88-.14-1.05-.05-1.23.06-1.22.16-1.04.24-.87.32-.71.36-.57.4-.44.42-.33.42-.24.4-.16.36-.1.32-.05.24-.01h.16l.06.01h8.16v-.83H6.18l-.01-2.75-.02-.37.05-.34.11-.31.17-.28.25-.26.31-.23.38-.2.44-.18.51-.15.58-.12.64-.1.71-.06.77-.04.84-.02 1.27.05zm-6.3 1.98l-.23.33-.08.41.08.41.23.34.33.22.41.09.41-.09.33-.22.23-.34.08-.41-.08-.41-.23-.33-.33-.22-.41-.09-.41.09z"/><path fill-rule="evenodd" fill="#FAE4A2" d="M21.04 6.11l.28.06.32.12.35.18.36.27.36.35.35.47.32.59.28.73.21.88.14 1.04.05 1.23-.06 1.23-.16 1.04-.24.86-.32.71-.36.57-.4.45-.42.33-.42.24-.4.16-.36.09-.32.05-.24.02-.16-.01h-8.22v.82h5.84l.01 2.76.02.36-.05.34-.11.31-.17.29-.25.25-.31.24-.38.2-.44.17-.51.15-.58.13-.64.09-.71.07-.77.04-.84.01-1.27-.04-1.07-.14-.9-.2-.73-.25-.59-.3-.45-.33-.34-.34-.25-.34-.16-.33-.1-.3-.04-.25-.02-.2.01-.13v-5.34l.05-.64.13-.54.21-.46.26-.38.3-.32.33-.24.35-.2.35-.14.33-.1.3-.06.26-.04.21-.02.13-.01h5.84l.69-.05.59-.14.5-.21.41-.28.33-.32.27-.35.2-.36.15-.36.1-.35.07-.32.04-.28.02-.21V6.07h2.09l.14.01zm-6.47 14.25l-.23.33-.08.41.08.41.23.33.33.23.41.08.41-.08.33-.23.23-.33.08-.41-.08-.41-.23-.33-.33-.23-.41-.08-.41.08z"/></g></svg>
<span class="t" id="tscript2" style="left:352.00px;top:1271px;font-size:33px;color:#000;letter-spacing:1.100px">script</span>
<svg class="i" style="left:468.0px;top:1292.0px" width="20" height="20" viewBox="-10.0 -10.0 20 20" ><path d="M-8.0 -8.0L8.0 8.0M8.0 -8.0L-8.0 8.0" stroke="#B4B8C8" stroke-width="2.6" stroke-linecap="round" fill="none"/></svg>
<div style="left:274.5px;top:1346px;width:241.5px;height:8px;background:#5A80E6;border-radius:4px"></div>
<svg class="i" style="left:3228.0px;top:1283.8px" width="7.4" height="32.4" viewBox="-3.7 -16.2 7.4 32.4" ><circle cx="0" cy="-12.5" r="2.7" fill="#6C707E"/><circle cx="0" cy="0" r="2.7" fill="#6C707E"/><circle cx="0" cy="12.5" r="2.7" fill="#6C707E"/></svg>
<div style="left:3284px;top:1299px;width:32px;height:2.6px;background:#6C707E;border-radius:1.300px"></div>
<svg class="i" style="left:140px;top:1372px" width="44" height="48" viewBox="140 1372 44 48"><g fill="none" stroke="#6C707E" stroke-width="2.7" stroke-linecap="round" stroke-linejoin="round"><path d="M171.500 1389.500A14.300 14.300 0 1 0 157.400 1410"/><path d="M171.900 1379.200v10.600h-10.600"/></g></svg><svg class="i" style="left:154px;top:1392px" width="30" height="30" viewBox="154 1392 30 30"><g fill="none" stroke="#3B873B" stroke-width="2.5" stroke-linecap="round" stroke-linejoin="round"><ellipse cx="168" cy="1408" rx="5.900" ry="6.700" fill="#F2FBF2"/><path d="M163.900 1400.800a4.200 4.200 0 0 1 8.200 0"/><path d="M158.800 1402l3.400 2.400M177.300 1402l-3.400 2.400M158.800 1415l3.600-2.900M177.300 1415l-3.600-2.900"/></g></svg>
<div style="left:211.3px;top:1381.2px;width:29.4px;height:29.4px;background:#CFCFCF;border-radius:5px;box-shadow:inset 0 0 0 2px #C5C5C5"></div>
<div style="left:268px;top:1372px;width:2px;height:46px;background:#DCDDE1;"></div>
<svg class="i" style="left:292px;top:1374px" width="46" height="44" viewBox="292 1374 46 44"><g fill="none" stroke="#C4C4C4" stroke-width="2" stroke-linecap="round" stroke-linejoin="round"><rect x="297.700" y="1382.200" width="7.700" height="27.400" rx="2.200" fill="#D0D0D0"/><path d="M312.500 1384v24a1.800 1.800 0 0 0 2.900 1.400l15-12a1.800 1.800 0 0 0 0-2.800l-15-12a1.800 1.800 0 0 0-2.900 1.400z" fill="#D0D0D0"/></g></svg>
<svg class="i" style="left:362px;top:1374px" width="40" height="44" viewBox="362 1374 40 44"><g fill="none" stroke="#BDBDBD" stroke-width="2.6" stroke-linecap="round" stroke-linejoin="round"><path d="M367.500 1399l13.100-13.400L396 1399.900M396 1385.600v14.600h-14M368.800 1412.100h26.600"/></g></svg>
<svg class="i" style="left:430px;top:1374px" width="40" height="44" viewBox="430 1374 40 44"><g fill="none" stroke="#BDBDBD" stroke-width="2.6" stroke-linecap="round" stroke-linejoin="round"><path d="M449.900 1380.100v25M439.400 1394l10.500 11.100L460.600 1394M436.900 1412.100h26.200"/></g></svg>
<svg class="i" style="left:498px;top:1374px" width="40" height="44" viewBox="498 1374 40 44"><g fill="none" stroke="#BDBDBD" stroke-width="2.6" stroke-linecap="round" stroke-linejoin="round"><path d="M517.900 1405.100v-24.300M507.500 1392l10.400-11.200L528.600 1392M504.600 1412.100h26.600"/></g></svg>
<div style="left:560px;top:1372px;width:2px;height:46px;background:#DCDDE1;"></div>
<svg class="i" style="left:586px;top:1374px" width="42" height="44" viewBox="586 1374 42 44"><g fill="none" stroke="#C9363F" stroke-width="2.6" stroke-linecap="round" stroke-linejoin="round"><circle cx="611.300" cy="1390.800" r="10.700" fill="#FDF3F3" stroke="none"/><path d="M602.500 1384.700A10.700 10.700 0 1 1 617.600 1399.500"/><circle cx="602" cy="1399.600" r="10.500" fill="#FDF3F3"/></g></svg>
<svg class="i" style="left:654px;top:1374px" width="42" height="44" viewBox="654 1374 42 44"><g fill="none" stroke="#C9363F" stroke-width="2.6" stroke-linecap="round" stroke-linejoin="round"><circle cx="674.200" cy="1395.800" r="12.500" fill="#FDF3F3" stroke="none"/><path d="M664.200 1403.300A12.500 12.500 0 0 1 680 1384.700M684.200 1388.300A12.500 12.500 0 0 1 668.500 1406.900"/><path d="M661 1409L687.500 1382.700" stroke="#F7F8FA" stroke-width="7" stroke-linecap="butt"/><path d="M659.800 1410.200L688.600 1381.600" stroke="#5F6373"/></g></svg>
<svg class="i" style="left:738.3px;top:1379.7px" width="7.4" height="32.6" viewBox="-3.7 -16.3 7.4 32.6" ><circle cx="0" cy="-12.6" r="2.7" fill="#6C707E"/><circle cx="0" cy="0" r="2.7" fill="#6C707E"/><circle cx="0" cy="12.6" r="2.7" fill="#6C707E"/></svg>
<span class="t" id="tthreads" style="left:847.00px;top:1369px;font-size:33px;color:#000;letter-spacing:0.278px">Threads &amp; Variables</span>
<span class="t" id="tconsole" style="left:1211.00px;top:1369px;font-size:33px;color:#000;letter-spacing:0.583px">Console</span>
<div style="left:1180px;top:1436px;width:188px;height:5px;background:#4672E6;"></div>
<svg class="i" style="left:3306px;top:1376px" width="40" height="40" viewBox="0 0 40 40" ><g fill="none" stroke="#6C707E" stroke-width="3" stroke-linecap="round" stroke-linejoin="round"><rect x="6.500" y="6.500" width="27" height="27" rx="5"/><path d="M18.500 7v26M18.500 19.500h15"/></g></svg>
<svg class="i" style="left:130px;top:1468px" width="40" height="40" viewBox="130 1468 40 40"><g fill="none" stroke="#B9BCC5" stroke-width="2.6" stroke-linecap="round" stroke-linejoin="round"><path d="M149.700 1502.300v-28M139 1485.500l10.700-11.300L161 1485.500"/></g></svg>
<svg class="i" style="left:130px;top:1536px" width="40" height="40" viewBox="130 1536 40 40"><g fill="none" stroke="#B9BCC5" stroke-width="2.6" stroke-linecap="round" stroke-linejoin="round"><path d="M149.700 1542v28M139 1559l10.700 11L161 1559"/></g></svg>
<svg class="i" style="left:128px;top:1606px" width="44" height="40" viewBox="128 1606 44 40"><g fill="none" stroke="#6C707E" stroke-width="2.7" stroke-linecap="round" stroke-linejoin="round"><path d="M133.200 1612.800h33.900M133.200 1623.900h27.400a5.600 5.600 0 0 1 0 11.200h-9.800M157 1629.700l-6.200 5.400 6.200 5.800M133.200 1635.300h11.300"/></g></svg>
<svg class="i" style="left:128px;top:1672px" width="44" height="40" viewBox="128 1672 44 40"><g fill="none" stroke="#6C707E" stroke-width="2.7" stroke-linecap="round" stroke-linejoin="round"><path d="M133.200 1680.900h11.300M133.200 1692h11.300M133.200 1703.400h33.900M158.800 1679.700v18.800M150.800 1690.400l8 8.300 8.100-8.300"/></g></svg>
<svg class="i" style="left:128px;top:1740px" width="44" height="40" viewBox="128 1740 44 40"><g fill="none" stroke="#C3C4C8" stroke-width="2.5" stroke-linecap="round" stroke-linejoin="round"><path d="M140.500 1755v-8.600h19V1755M140.500 1768h-5.500a1.500 1.500 0 0 1-1.500-1.500v-9.500a2.600 2.600 0 0 1 2.600-2.600h27.800a2.600 2.600 0 0 1 2.600 2.600v9.500a1.500 1.500 0 0 1-1.500 1.500h-5.500M140.500 1763.500h19v9.500h-19z"/></g></svg>
<svg class="i" style="left:130px;top:1806px" width="40" height="44" viewBox="130 1806 40 44"><g fill="none" stroke="#6C707E" stroke-width="2.7" stroke-linecap="round" stroke-linejoin="round"><path d="M136 1818h28M143.500 1817.500v-3a2.500 2.500 0 0 1 2.500-2.500h8a2.500 2.500 0 0 1 2.500 2.500v3M138.300 1818.500v21.500a3.500 3.500 0 0 0 3.500 3.500h16.400a3.500 3.500 0 0 0 3.500-3.500v-21.500M146.500 1826v10M153.500 1826v10"/></g></svg>
<svg class="i" style="left:138px;top:1874px" width="24" height="32" viewBox="138 1874 24 32"><g fill="none" stroke="#6C707E" stroke-width="2.7" stroke-linecap="round" stroke-linejoin="round"><path d="M144.500 1881l9.500 9-9.500 9"/></g></svg>
<div class="con"><div>deephaven.cacheDir=/Users/alexpeters/Library/Caches/io.Deephaven-Data-Labs.deephaven</div><div>deephaven.configDir=/Users/alexpeters/Library/Application Support/io.Deephaven-Data-Labs.deephaven</div><div>deephaven.dataDir=/Users/alexpeters/Library/Application Support/io.Deephaven-Data-Labs.deephaven</div><div># io.deephaven.internal.log.LoggerFactoryServiceLoaderImpl: searching for &#x27;io.deephaven.internal.log.LoggerFactory&#x27;...</div><div># io.deephaven.internal.log.LoggerFactoryServiceLoaderImpl: found &#x27;io.deephaven.internal.log.LoggerFactorySlf4j&#x27;</div><div>Server started on port 10000</div><div></div><div class="fin">Process finished with exit code 0</div></div>
<svg class="i" style="left:38px;top:1943px" width="35" height="35" viewBox="0 0 24 24" ><g><path fill-rule="evenodd" fill="#4F82F2" d="M14.25.18l.9.2.73.26.59.3.45.32.34.34.25.34.16.33.1.3.04.26.02.2-.01.13V8.5l-.05.63-.13.55-.21.46-.26.38-.3.31-.33.25-.35.19-.35.14-.33.1-.3.07-.26.04-.21.02H8.77l-.69.05-.59.14-.5.22-.41.27-.33.32-.27.35-.2.36-.15.37-.1.35-.07.32-.04.27-.02.21v3.06H3.17l-.21-.03-.28-.07-.32-.12-.35-.18-.36-.26-.36-.36-.35-.46-.32-.59-.28-.73-.21-.88-.14-1.05-.05-1.23.06-1.22.16-1.04.24-.87.32-.71.36-.57.4-.44.42-.33.42-.24.4-.16.36-.1.32-.05.24-.01h.16l.06.01h8.16v-.83H6.18l-.01-2.75-.02-.37.05-.34.11-.31.17-.28.25-.26.31-.23.38-.2.44-.18.51-.15.58-.12.64-.1.71-.06.77-.04.84-.02 1.27.05zm-6.3 1.98l-.23.33-.08.41.08.41.23.34.33.22.41.09.41-.09.33-.22.23-.34.08-.41-.08-.41-.23-.33-.33-.22-.41-.09-.41.09z"/><path fill-rule="evenodd" fill="#F2B03D" d="M21.04 6.11l.28.06.32.12.35.18.36.27.36.35.35.47.32.59.28.73.21.88.14 1.04.05 1.23-.06 1.23-.16 1.04-.24.86-.32.71-.36.57-.4.45-.42.33-.42.24-.4.16-.36.09-.32.05-.24.02-.16-.01h-8.22v.82h5.84l.01 2.76.02.36-.05.34-.11.31-.17.29-.25.25-.31.24-.38.2-.44.17-.51.15-.58.13-.64.09-.71.07-.77.04-.84.01-1.27-.04-1.07-.14-.9-.2-.73-.25-.59-.3-.45-.33-.34-.34-.25-.34-.16-.33-.1-.3-.04-.25-.02-.2.01-.13v-5.34l.05-.64.13-.54.21-.46.26-.38.3-.32.33-.24.35-.2.35-.14.33-.1.3-.06.26-.04.21-.02.13-.01h5.84l.69-.05.59-.14.5-.21.41-.28.33-.32.27-.35.2-.36.15-.36.1-.35.07-.32.04-.28.02-.21V6.07h2.09l.14.01zm-6.47 14.25l-.23.33-.08.41.08.41.23.33.33.23.41.08.41-.08.33-.23.23-.33.08-.41-.08-.41-.23-.33-.33-.23-.41-.08-.41.08z"/></g></svg>
<span class="t" id="tpyconsole" style="left:85.00px;top:1933px;font-size:33px;color:#6C707E;letter-spacing:0.500px">Python Console.py</span>
<span class="t" id="tpos" style="left:2407.00px;top:1933px;font-size:33px;color:#6C707E;letter-spacing:1.167px">3:34</span>
<span class="t" id="tlf" style="left:2514.40px;top:1933px;font-size:33px;color:#6C707E;letter-spacing:-0.100px">LF</span>
<span class="t" id="tutf" style="left:2591.00px;top:1933px;font-size:33px;color:#6C707E;letter-spacing:1.250px">UTF-8</span>
<svg class="i" style="left:2721.5px;top:1932.3px" width="58.4" height="58.4" viewBox="0 0 80 80"><g fill="none" stroke="#6C707E" stroke-width="4.1"><rect x="22.100" y="22.100" width="15.700" height="16.700" rx="6.300"/><rect x="40.400" y="22.100" width="15.700" height="16.700" rx="6.300"/></g><path fill="#6C707E" d="M20.500 38.300C17 40.500 15.100 43.500 15.100 46.600V50.500C21 56 30 61.700 39 61.700S57 56 63.100 50.500V46.600C63.100 43.500 61.200 40.500 57.700 38.300L54.100 40.300V52.700C49 55.500 44 57.600 39 57.600S29 55.500 23.900 52.700V40.300z"/><rect x="31.600" y="43.900" width="4.400" height="9.100" rx="2.200" fill="#6C707E"/><rect x="42" y="43.900" width="4.400" height="9.100" rx="2.200" fill="#6C707E"/></svg>
<span class="t" id="tspaces" style="left:2811.00px;top:1933px;font-size:33px;color:#6C707E;letter-spacing:0.571px">4 spaces</span>
<span class="t" id="tinterp" style="left:2987.00px;top:1933px;font-size:33px;color:#6C707E;letter-spacing:0.500px">Python 3.12 (pycharm)</span>
<svg class="i" style="left:3372px;top:1936px" width="44" height="48" viewBox="0 0 44 48" ><g fill="none" stroke="#6C707E" stroke-width="2.8" stroke-linecap="round" stroke-linejoin="round"><rect x="6.800" y="22.500" width="23" height="17.500" rx="4.500"/><path d="M18.300 28.500v5.500M24.500 22v-4.500a6.500 6.500 0 0 1 13 0V22"/></g></svg>
</div></div></body></html>
